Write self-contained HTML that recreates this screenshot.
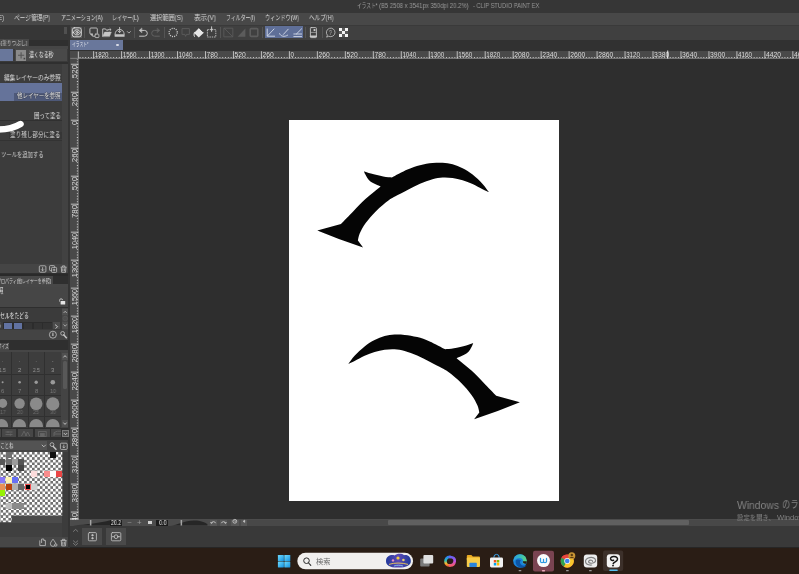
<!DOCTYPE html>
<html lang="ja">
<head>
<meta charset="utf-8">
<title>CLIP STUDIO PAINT EX</title>
<style>
*{box-sizing:border-box;margin:0;padding:0}
html,body{width:799px;height:574px;overflow:hidden;background:#2d2d2d}
body{font-family:"Liberation Sans","Noto Sans CJK JP",sans-serif;color:#d0d0d0;font-size:7px;position:relative}
.a{position:absolute}
.t{position:absolute;white-space:pre;line-height:1;transform-origin:0 50%;display:block;will-change:transform}
svg{position:absolute;overflow:visible;will-change:transform}
</style>
</head>
<body>
<div class="a" style="left:0px;top:0px;width:799px;height:12.5px;background:#363636;"></div>
<div class="a" style="left:0px;top:12.5px;width:799px;height:12.5px;background:#484848;"></div>
<div class="a" style="left:0px;top:25px;width:799px;height:14.6px;background:#404040;"></div>
<div class="a" style="left:0px;top:24.8px;width:799px;height:0.8px;background:#3a3a3a;"></div>
<div class="a" style="left:0px;top:39.6px;width:799px;height:11.2px;background:#313131;"></div>
<div class="a" style="left:69.7px;top:39.8px;width:53.2px;height:10.2px;background:#69779b;"></div>
<div class="a" style="left:69.7px;top:50.8px;width:729.3px;height:7.9px;background:#494949;"></div>
<div class="a" style="left:69.7px;top:58.6px;width:8.5px;height:460.6px;background:#494949;"></div>
<div class="a" style="left:78.2px;top:58.6px;width:720.8px;height:460.6px;background:#2e2e2e;"></div>
<div class="a" style="left:289px;top:119.8px;width:270.2px;height:381.2px;background:#ffffff;"></div>
<div class="a" style="left:69.7px;top:519.3px;width:729.3px;height:6.7px;background:#4c4c4c;"></div>
<div class="a" style="left:69.7px;top:526px;width:729.3px;height:20.8px;background:#393939;"></div>
<div class="a" style="left:0px;top:546.8px;width:799px;height:1.4px;background:#262626;"></div>
<div class="a" style="left:0px;top:548px;width:799px;height:26px;background:#2a1d15;"></div>
<div class="a" style="left:116.3px;top:43.6px;width:2.4px;height:2.4px;background:#d8dbe6;border-radius:50%"></div>
<div class="a" style="left:0px;top:39.6px;width:68.3px;height:508.4px;background:#2f2f2f;"></div>
<div class="a" style="left:68.3px;top:39.6px;width:1.4px;height:508.4px;background:#343434;"></div>
<div class="a" style="left:0px;top:25.4px;width:69.7px;height:14.2px;background:#363636;"></div>
<div class="a" style="left:64.4px;top:27.4px;width:2.8px;height:6.8px;background:#505050;"></div>
<div class="a" style="left:0px;top:38.6px;width:28.8px;height:7.9px;background:#474747;"></div>
<div class="a" style="left:0px;top:46.4px;width:68.3px;height:2.2px;background:#464646;"></div>
<div class="a" style="left:0px;top:48.6px;width:68.3px;height:13px;background:#3a3a3a;"></div>
<div class="a" style="left:0px;top:49.4px;width:13.2px;height:11.8px;background:#69779b;"></div>
<div class="a" style="left:15.4px;top:49.4px;width:51.8px;height:11.8px;background:#494949;"></div>
<div class="a" style="left:16px;top:50px;width:10.2px;height:10.6px;background:#8a8a8a;"></div>
<svg style="left:16px;top:50px" width="10.2" height="10.6" viewBox="0 0 10.2 10.6"><path d="M5.1 2.2V8.4M2 5.3H8.2" stroke="#555" stroke-width="1.1" fill="none"/><rect x="7.6" y="7.8" width="1.6" height="1.6" fill="#444"/></svg>
<div class="a" style="left:0px;top:64px;width:61.6px;height:199.5px;background:#3c3c3c;"></div>
<div class="a" style="left:61.6px;top:64px;width:6.7px;height:199.5px;background:#424242;"></div>
<div class="a" style="left:0px;top:83px;width:61.6px;height:17.8px;background:#65739a;"></div>
<div class="a" style="left:14.4px;top:93.2px;width:47.2px;height:7.4px;background:rgba(30,34,52,0.32);"></div>
<div class="a" style="left:0px;top:119.5px;width:61.6px;height:0.8px;background:#303030;"></div>
<div class="a" style="left:0px;top:140.3px;width:61.6px;height:0.8px;background:#333333;"></div>
<svg style="left:0;top:118px" width="30" height="18" viewBox="0 118 30 18"><path d="M-4 129.5 C5 129.8 13 128.8 20.5 124.1" stroke="#fff" stroke-width="6.5" stroke-linecap="round" fill="none"/></svg>
<div class="a" style="left:9.4px;top:132.2px;width:52.2px;height:7.2px;background:rgba(50,50,50,0.55);"></div>
<div class="a" style="left:0px;top:263.5px;width:68.3px;height:9.8px;background:#454545;"></div>
<svg style="left:38px;top:264px" width="30" height="9" viewBox="38 264 30 9" fill="none" stroke="#c4c4c4" stroke-width="0.8"><rect x="39.3" y="265.8" width="6.6" height="6.4" rx="1"/><path d="M42.6 267.2V270.6M41.2 269.4L42.6 270.8L44 269.4"/><rect x="49.6" y="265.6" width="5" height="5" rx="0.8"/><rect x="51.6" y="267.4" width="5" height="5" rx="0.8" fill="#454545"/><path d="M54.1 268.6V271.2M52.8 269.9H55.4"/><path d="M60.6 267.2H66.6M62.4 267V265.9H64.8V267M61.3 267.4L61.7 272.3H65.5L65.9 267.4M62.8 268.4V271.2M64.4 268.4V271.2"/></svg>
<div class="a" style="left:0px;top:276px;width:52.7px;height:8.6px;background:#484848;"></div>
<div class="a" style="left:0px;top:273.6px;width:68.3px;height:2.4px;background:#2a2a2a;"></div>
<div class="a" style="left:0px;top:284.2px;width:68.3px;height:3.1px;background:#474747;"></div>
<div class="a" style="left:0px;top:287.2px;width:68.3px;height:20px;background:#464646;"></div>
<div class="a" style="left:0px;top:307.2px;width:68.3px;height:22.6px;background:#3b3b3b;"></div>
<svg style="left:58px;top:298px" width="8" height="7" viewBox="58 298 8 7"><path d="M59.6 301.6V300.4A1.5 1.5 0 0 1 62.6 300.2" stroke="#d8d8d8" stroke-width="0.8" fill="none"/><rect x="60.6" y="301" width="4.6" height="3.4" rx="0.5" fill="#e4e4e4"/></svg>
<div class="a" style="left:0px;top:307.2px;width:68.3px;height:0.8px;background:#2e2e2e;"></div>
<div class="a" style="left:62px;top:308.4px;width:6.3px;height:21.2px;background:#464646;"></div>
<div class="a" style="left:62.3px;top:309.2px;width:5.8px;height:5.8px;background:#505050;"></div>
<div class="a" style="left:62.3px;top:322px;width:5.8px;height:6.6px;background:#505050;"></div>
<svg style="left:62px;top:308px" width="7" height="22" viewBox="62 308 7 22" fill="none" stroke="#bdbdbd" stroke-width="0.8"><path d="M63.6 313L65.2 311.2L66.8 313M63.6 324.4L65.2 326.2L66.8 324.4"/><circle cx="65.2" cy="318.5" r="2.3" stroke="#595959" fill="#4e4e4e"/></svg>
<div class="a" style="left:3px;top:322.4px;width:49.2px;height:6.8px;background:#2c2c2c;"></div>
<div class="a" style="left:3.9px;top:322.9px;width:8.2px;height:5.8px;background:#6172a1;"></div>
<div class="a" style="left:13.8px;top:322.9px;width:8.2px;height:5.8px;background:#6172a1;"></div>
<div class="a" style="left:23.9px;top:322.9px;width:8.2px;height:5.8px;background:#343434;"></div>
<div class="a" style="left:33.6px;top:322.9px;width:8.2px;height:5.8px;background:#343434;"></div>
<div class="a" style="left:43.4px;top:322.9px;width:8.2px;height:5.8px;background:#343434;"></div>
<div class="a" style="left:52.6px;top:322.2px;width:7.6px;height:7.2px;background:#4c4c4c;"></div>
<svg style="left:52px;top:322px" width="9" height="8" viewBox="52 322 9 8" fill="none" stroke="#d0d0d0" stroke-width="0.9"><path d="M55 324.6L57.6 326.6L55.6 328.6"/></svg>
<div class="a" style="left:0px;top:329.8px;width:68.3px;height:10px;background:#444444;"></div>
<svg style="left:48px;top:330px" width="21" height="10" viewBox="48 330 21 10" fill="none" stroke="#c4c4c4" stroke-width="0.8"><circle cx="52.9" cy="334.7" r="3.5"/><path d="M52.9 332.6V334.9" stroke-width="1"/><circle cx="52.9" cy="335.2" r="0.8" fill="#c4c4c4" stroke="none"/><path d="M66.8 338.2L63.4 334.6" stroke-width="1.5"/><circle cx="62.6" cy="333.4" r="1.9"/></svg>
<div class="a" style="left:0px;top:342.7px;width:9px;height:7.6px;background:#484848;"></div>
<div class="a" style="left:0px;top:350px;width:68.3px;height:2.4px;background:#464646;"></div>
<div class="a" style="left:0px;top:352.4px;width:61.3px;height:75.2px;background:#3d3d3d;"></div>
<div class="a" style="left:11.0px;top:352.4px;width:0.9px;height:75.2px;background:#303030;"></div>
<div class="a" style="left:27.6px;top:352.4px;width:0.9px;height:75.2px;background:#303030;"></div>
<div class="a" style="left:44.2px;top:352.4px;width:0.9px;height:75.2px;background:#303030;"></div>
<div class="a" style="left:0px;top:373.8px;width:61.3px;height:0.9px;background:#303030;"></div>
<div class="a" style="left:0px;top:395px;width:61.3px;height:0.9px;background:#303030;"></div>
<div class="a" style="left:0px;top:415.8px;width:61.3px;height:0.9px;background:#303030;"></div>
<svg style="left:0;top:352.4px;overflow:hidden" width="61.3" height="75.2" viewBox="0 352.4 61.3 75.2"><circle cx="2.6" cy="361.8" r="0.35" fill="#8a8a8a"/><circle cx="19.6" cy="361.8" r="0.4" fill="#8a8a8a"/><circle cx="36.2" cy="361.8" r="0.45" fill="#8a8a8a"/><circle cx="52.8" cy="361.8" r="0.5" fill="#8a8a8a"/><circle cx="2.6" cy="382.7" r="1.0" fill="#9a9a9a"/><circle cx="19.6" cy="382.7" r="1.3" fill="#9a9a9a"/><circle cx="36.2" cy="382.7" r="1.7" fill="#9a9a9a"/><circle cx="52.8" cy="382.7" r="2.3" fill="#9a9a9a"/><circle cx="2.6" cy="403.7" r="4.6" fill="#8a8a8a"/><circle cx="19.6" cy="403.88" r="5.2" fill="#8a8a8a"/><circle cx="36.2" cy="404.21000000000004" r="6.3" fill="#8a8a8a"/><circle cx="52.8" cy="404.3" r="6.6" fill="#8a8a8a"/><circle cx="1.5" cy="426.0" r="6.6" fill="#8a8a8a"/><circle cx="19.4" cy="426.0" r="6.6" fill="#8a8a8a"/><circle cx="36.2" cy="426.2" r="6.8" fill="#8a8a8a"/><circle cx="52.8" cy="426.2" r="6.8" fill="#8a8a8a"/></svg>
<div class="a" style="left:61.3px;top:352.4px;width:7px;height:75.2px;background:#444444;"></div>
<div class="a" style="left:62px;top:353px;width:5.9px;height:6.6px;background:#505050;"></div>
<div class="a" style="left:62px;top:420px;width:5.9px;height:7px;background:#505050;"></div>
<div class="a" style="left:63px;top:360.6px;width:4.2px;height:28.4px;background:#585858;border-radius:1.5px"></div>
<svg style="left:61px;top:352px" width="8" height="76" viewBox="61 352 8 76" fill="none" stroke="#c8c8c8" stroke-width="0.9"><path d="M63.4 357.4L65 355.6L66.6 357.4M63.4 422.6L65 424.4L66.6 422.6"/></svg>
<div class="a" style="left:0px;top:427.6px;width:68.3px;height:1.8px;background:#2e2e2e;"></div>
<div class="a" style="left:-2px;top:429.4px;width:2.6px;height:7.9px;background:#474747;"></div>
<div class="a" style="left:1.8px;top:429.4px;width:14.2px;height:7.9px;background:#474747;"></div>
<div class="a" style="left:18px;top:429.4px;width:15px;height:7.9px;background:#474747;"></div>
<div class="a" style="left:35px;top:429.4px;width:14.6px;height:7.9px;background:#474747;"></div>
<div class="a" style="left:51.2px;top:429.4px;width:10.2px;height:7.9px;background:#474747;"></div>
<svg style="left:0;top:429px" width="62" height="9" viewBox="0 429 62 9" fill="none" stroke="#666" stroke-width="0.9"><path d="M5.5 432H12.5M5.5 434.6H12.5M8 431V433M10.4 433.6V435.6"/><path d="M21.5 436L24 431.2L26.5 436M25.5 436L27.6 432L29.8 436"/><rect x="38.6" y="431.6" width="7.6" height="4.8"/><rect x="40.6" y="433.4" width="3.6" height="3" fill="#666"/><path d="M54 436V432.6L57.4 431.2H61M54 434H61"/></svg>
<div class="a" style="left:62.4px;top:430px;width:6.2px;height:7.3px;background:#505050;border:0.8px solid #7a7a7a"></div>
<svg style="left:62px;top:430px" width="7" height="8" viewBox="62 430 7 8" fill="none" stroke="#c8c8c8" stroke-width="0.9"><path d="M63.8 433L65.5 434.8L67.2 433"/></svg>
<div class="a" style="left:0px;top:437.3px;width:68.3px;height:110.7px;background:#2f2f2f;"></div>
<div class="a" style="left:0px;top:440px;width:68.3px;height:11.6px;background:#444444;"></div>
<div class="a" style="left:0px;top:441px;width:47.3px;height:9px;background:#535353;"></div>
<svg style="left:40px;top:441px" width="29" height="10" viewBox="40 441 29 10" fill="none" stroke="#c4c4c4" stroke-width="0.8"><path d="M41.8 444.8L43.8 446.8L45.8 444.8" stroke-width="0.9"/><path d="M56.4 449.8L52.8 446" stroke-width="1.5"/><circle cx="52" cy="444.6" r="1.9"/><rect x="60.4" y="443.2" width="6.8" height="6.2" rx="1"/><path d="M63.8 444.6V447.8M62.4 446.6L63.8 448L65.2 446.6"/></svg>
<div class="a" style="left:0px;top:451.6px;width:62.3px;height:71px;background:#4b4b4b;"></div>
<div class="a" style="left:62.3px;top:451.6px;width:6px;height:85px;background:#3c3c3c;"></div>
<div class="a" style="left:0px;top:522.6px;width:62.3px;height:14px;background:#404040;"></div>
<svg style="left:0;top:452.2px" width="62.3" height="70.2" viewBox="0 452.2 62.3 70.2"><defs><pattern id="chk" patternUnits="userSpaceOnUse" x="0.5" y="449.46" width="5.25" height="5.28"><rect width="5.25" height="5.28" fill="#fff"/><rect x="2.625" width="2.625" height="2.64" fill="#707070"/><rect y="2.64" width="2.625" height="2.64" fill="#707070"/></pattern></defs><rect x="0" y="452.2" width="62.3" height="63.6" fill="url(#chk)"/><rect x="0" y="515.8" width="11.6" height="6.6" fill="url(#chk)"/></svg>
<div class="a" style="left:5.5px;top:452.2px;width:6.1px;height:6.06px;background:#6f6f6f;"></div>
<div class="a" style="left:49.95px;top:452.2px;width:6.1px;height:6.06px;background:#111111;"></div>
<div class="a" style="left:0px;top:458.51px;width:5.25px;height:6.06px;background:#585858;"></div>
<div class="a" style="left:5.5px;top:458.51px;width:6.1px;height:6.06px;background:#707070;"></div>
<div class="a" style="left:11.85px;top:458.51px;width:6.1px;height:6.06px;background:#9c9c9c;"></div>
<div class="a" style="left:18.2px;top:458.51px;width:6.1px;height:6.06px;background:#555555;"></div>
<div class="a" style="left:5.5px;top:464.82px;width:6.1px;height:6.06px;background:#000000;"></div>
<div class="a" style="left:18.2px;top:464.82px;width:6.1px;height:6.06px;background:#444444;"></div>
<div class="a" style="left:30.9px;top:471.13px;width:6.1px;height:6.06px;background:#fcdcdc;"></div>
<div class="a" style="left:43.6px;top:471.13px;width:6.1px;height:6.06px;background:#f98c8c;"></div>
<div class="a" style="left:49.95px;top:471.13px;width:6.1px;height:6.06px;background:#ffffff;"></div>
<div class="a" style="left:56.3px;top:471.13px;width:6.1px;height:6.06px;background:#ea4646;"></div>
<div class="a" style="left:0px;top:477.44px;width:5.25px;height:6.06px;background:#8878f8;"></div>
<div class="a" style="left:5.5px;top:477.44px;width:6.1px;height:6.06px;background:#fdf4b4;"></div>
<div class="a" style="left:11.85px;top:477.44px;width:6.1px;height:6.06px;background:#6670f4;"></div>
<div class="a" style="left:0px;top:483.75px;width:5.25px;height:6.06px;background:#e89058;"></div>
<div class="a" style="left:5.5px;top:483.75px;width:6.1px;height:6.06px;background:#b7430d;"></div>
<div class="a" style="left:11.85px;top:483.75px;width:6.1px;height:6.06px;background:#b0b0b0;"></div>
<div class="a" style="left:18.2px;top:483.75px;width:6.1px;height:6.06px;background:#666666;"></div>
<div class="a" style="left:24.55px;top:483.75px;width:6.1px;height:6.06px;background:#000000;border:1px solid #f05050;"></div>
<div class="a" style="left:30.9px;top:483.75px;width:6.1px;height:6.06px;background:#cfcfcf;"></div>
<div class="a" style="left:0px;top:490.06px;width:5.25px;height:6.06px;background:#96f205;"></div>
<div class="a" style="left:5.5px;top:502.68px;width:6.1px;height:6.06px;background:#bdbdbd;"></div>
<div class="a" style="left:11.85px;top:502.68px;width:12.45px;height:6.06px;background:#8a8a8a;"></div>
<div class="a" style="left:0px;top:536.6px;width:68.3px;height:10.3px;background:#474747;"></div>
<svg style="left:38px;top:537px" width="30" height="10" viewBox="38 537 30 10" fill="none" stroke="#c4c4c4" stroke-width="0.8"><path d="M39.8 540.4V545.6H45.4V540.4H43.8M41.6 543V539H43.8V540.6" /><path d="M53 539.2C51.4 541.4 50.4 542.6 50.4 543.8A2.6 2.6 0 0 0 55.6 543.8C55.6 542.6 54.6 541.4 53 539.2Z"/><circle cx="55.8" cy="545" r="1.2" fill="#474747"/><path d="M60.6 540.6H66.6M62.4 540.4V539.3H64.8V540.4M61.3 540.8L61.7 545.9H65.5L65.9 540.8M62.8 541.8V544.8M64.4 541.8V544.8"/></svg>
<svg style="left:69.7px;top:50px;overflow:hidden" width="729.3" height="8.6" viewBox="69.7 50 729.3 8.6"><path d="M77.8 51.5V58.6" stroke="#dadada" stroke-width="0.8"/><path d="M69.7 58.35H799" stroke="#a0a0a0" stroke-width="0.6"/><path d="M78.2 57.5H799" stroke="#dadada" stroke-width="1.1" stroke-dasharray="0.9 1.899" stroke-dashoffset="-0.875" opacity="0.9"/><path d="M93.07 51.2V58.6" stroke="#dadada" stroke-width="0.8"/><text x="94.17" y="57.4" font-size="7.1" fill="#dadada" textLength="13.90" lengthAdjust="spacingAndGlyphs" font-family='"Liberation Sans",sans-serif'>1820</text><path d="M121.06 51.2V58.6" stroke="#dadada" stroke-width="0.8"/><text x="122.16" y="57.4" font-size="7.1" fill="#dadada" textLength="13.90" lengthAdjust="spacingAndGlyphs" font-family='"Liberation Sans",sans-serif'>1560</text><path d="M149.05 51.2V58.6" stroke="#dadada" stroke-width="0.8"/><text x="150.15" y="57.4" font-size="7.1" fill="#dadada" textLength="13.90" lengthAdjust="spacingAndGlyphs" font-family='"Liberation Sans",sans-serif'>1300</text><path d="M177.04 51.2V58.6" stroke="#dadada" stroke-width="0.8"/><text x="178.14" y="57.4" font-size="7.1" fill="#dadada" textLength="13.90" lengthAdjust="spacingAndGlyphs" font-family='"Liberation Sans",sans-serif'>1040</text><path d="M205.03 51.2V58.6" stroke="#dadada" stroke-width="0.8"/><text x="206.13" y="57.4" font-size="7.1" fill="#dadada" textLength="11.30" lengthAdjust="spacingAndGlyphs" font-family='"Liberation Sans",sans-serif'>780</text><path d="M233.02 51.2V58.6" stroke="#dadada" stroke-width="0.8"/><text x="234.12" y="57.4" font-size="7.1" fill="#dadada" textLength="11.30" lengthAdjust="spacingAndGlyphs" font-family='"Liberation Sans",sans-serif'>520</text><path d="M261.01 51.2V58.6" stroke="#dadada" stroke-width="0.8"/><text x="262.11" y="57.4" font-size="7.1" fill="#dadada" textLength="11.30" lengthAdjust="spacingAndGlyphs" font-family='"Liberation Sans",sans-serif'>260</text><path d="M289.00 51.2V58.6" stroke="#dadada" stroke-width="0.8"/><text x="290.10" y="57.4" font-size="7.1" fill="#dadada" textLength="3.50" lengthAdjust="spacingAndGlyphs" font-family='"Liberation Sans",sans-serif'>0</text><path d="M316.99 51.2V58.6" stroke="#dadada" stroke-width="0.8"/><text x="318.09" y="57.4" font-size="7.1" fill="#dadada" textLength="11.30" lengthAdjust="spacingAndGlyphs" font-family='"Liberation Sans",sans-serif'>260</text><path d="M344.98 51.2V58.6" stroke="#dadada" stroke-width="0.8"/><text x="346.08" y="57.4" font-size="7.1" fill="#dadada" textLength="11.30" lengthAdjust="spacingAndGlyphs" font-family='"Liberation Sans",sans-serif'>520</text><path d="M372.97 51.2V58.6" stroke="#dadada" stroke-width="0.8"/><text x="374.07" y="57.4" font-size="7.1" fill="#dadada" textLength="11.30" lengthAdjust="spacingAndGlyphs" font-family='"Liberation Sans",sans-serif'>780</text><path d="M400.96 51.2V58.6" stroke="#dadada" stroke-width="0.8"/><text x="402.06" y="57.4" font-size="7.1" fill="#dadada" textLength="13.90" lengthAdjust="spacingAndGlyphs" font-family='"Liberation Sans",sans-serif'>1040</text><path d="M428.95 51.2V58.6" stroke="#dadada" stroke-width="0.8"/><text x="430.05" y="57.4" font-size="7.1" fill="#dadada" textLength="13.90" lengthAdjust="spacingAndGlyphs" font-family='"Liberation Sans",sans-serif'>1300</text><path d="M456.94 51.2V58.6" stroke="#dadada" stroke-width="0.8"/><text x="458.04" y="57.4" font-size="7.1" fill="#dadada" textLength="13.90" lengthAdjust="spacingAndGlyphs" font-family='"Liberation Sans",sans-serif'>1560</text><path d="M484.93 51.2V58.6" stroke="#dadada" stroke-width="0.8"/><text x="486.03" y="57.4" font-size="7.1" fill="#dadada" textLength="13.90" lengthAdjust="spacingAndGlyphs" font-family='"Liberation Sans",sans-serif'>1820</text><path d="M512.92 51.2V58.6" stroke="#dadada" stroke-width="0.8"/><text x="514.02" y="57.4" font-size="7.1" fill="#dadada" textLength="15.20" lengthAdjust="spacingAndGlyphs" font-family='"Liberation Sans",sans-serif'>2080</text><path d="M540.91 51.2V58.6" stroke="#dadada" stroke-width="0.8"/><text x="542.01" y="57.4" font-size="7.1" fill="#dadada" textLength="15.20" lengthAdjust="spacingAndGlyphs" font-family='"Liberation Sans",sans-serif'>2340</text><path d="M568.90 51.2V58.6" stroke="#dadada" stroke-width="0.8"/><text x="570.00" y="57.4" font-size="7.1" fill="#dadada" textLength="15.20" lengthAdjust="spacingAndGlyphs" font-family='"Liberation Sans",sans-serif'>2600</text><path d="M596.89 51.2V58.6" stroke="#dadada" stroke-width="0.8"/><text x="597.99" y="57.4" font-size="7.1" fill="#dadada" textLength="15.20" lengthAdjust="spacingAndGlyphs" font-family='"Liberation Sans",sans-serif'>2860</text><path d="M624.88 51.2V58.6" stroke="#dadada" stroke-width="0.8"/><text x="625.98" y="57.4" font-size="7.1" fill="#dadada" textLength="13.90" lengthAdjust="spacingAndGlyphs" font-family='"Liberation Sans",sans-serif'>3120</text><path d="M652.87 51.2V58.6" stroke="#dadada" stroke-width="0.8"/><text x="653.97" y="57.4" font-size="7.1" fill="#dadada" textLength="15.20" lengthAdjust="spacingAndGlyphs" font-family='"Liberation Sans",sans-serif'>3380</text><path d="M680.86 51.2V58.6" stroke="#dadada" stroke-width="0.8"/><text x="681.96" y="57.4" font-size="7.1" fill="#dadada" textLength="15.20" lengthAdjust="spacingAndGlyphs" font-family='"Liberation Sans",sans-serif'>3640</text><path d="M708.85 51.2V58.6" stroke="#dadada" stroke-width="0.8"/><text x="709.95" y="57.4" font-size="7.1" fill="#dadada" textLength="15.20" lengthAdjust="spacingAndGlyphs" font-family='"Liberation Sans",sans-serif'>3900</text><path d="M736.84 51.2V58.6" stroke="#dadada" stroke-width="0.8"/><text x="737.94" y="57.4" font-size="7.1" fill="#dadada" textLength="13.90" lengthAdjust="spacingAndGlyphs" font-family='"Liberation Sans",sans-serif'>4160</text><path d="M764.83 51.2V58.6" stroke="#dadada" stroke-width="0.8"/><text x="765.93" y="57.4" font-size="7.1" fill="#dadada" textLength="15.20" lengthAdjust="spacingAndGlyphs" font-family='"Liberation Sans",sans-serif'>4420</text><path d="M792.82 51.2V58.6" stroke="#dadada" stroke-width="0.8"/><text x="793.92" y="57.4" font-size="7.1" fill="#dadada" textLength="15.20" lengthAdjust="spacingAndGlyphs" font-family='"Liberation Sans",sans-serif'>4680</text><path d="M667.6 50.5V58.6" stroke="#ffffff" stroke-width="0.9"/></svg>
<svg style="left:69.7px;top:58.6px;overflow:hidden" width="8.5" height="460.6" viewBox="69.7 58.6 8.5 460.6"><path d="M77.95 58.6V519.2" stroke="#a0a0a0" stroke-width="0.6"/><path d="M77.1 58.6V519.2" stroke="#dadada" stroke-width="1.1" stroke-dasharray="0.9 1.899" stroke-dashoffset="-2.421" opacity="0.9"/><path d="M70.6 63.82H78.2" stroke="#dadada" stroke-width="0.8"/><text transform="translate(76.6 77.77) rotate(-90)" font-size="7.9" fill="#dadada" textLength="13.25" lengthAdjust="spacingAndGlyphs" font-family='"Liberation Sans",sans-serif'>520</text><path d="M70.6 91.81H78.2" stroke="#dadada" stroke-width="0.8"/><text transform="translate(76.6 105.76) rotate(-90)" font-size="7.9" fill="#dadada" textLength="13.25" lengthAdjust="spacingAndGlyphs" font-family='"Liberation Sans",sans-serif'>260</text><path d="M70.6 119.80H78.2" stroke="#dadada" stroke-width="0.8"/><text transform="translate(76.6 124.65) rotate(-90)" font-size="7.9" fill="#dadada" textLength="4.15" lengthAdjust="spacingAndGlyphs" font-family='"Liberation Sans",sans-serif'>0</text><path d="M70.6 147.79H78.2" stroke="#dadada" stroke-width="0.8"/><text transform="translate(76.6 161.74) rotate(-90)" font-size="7.9" fill="#dadada" textLength="13.25" lengthAdjust="spacingAndGlyphs" font-family='"Liberation Sans",sans-serif'>260</text><path d="M70.6 175.78H78.2" stroke="#dadada" stroke-width="0.8"/><text transform="translate(76.6 189.73) rotate(-90)" font-size="7.9" fill="#dadada" textLength="13.25" lengthAdjust="spacingAndGlyphs" font-family='"Liberation Sans",sans-serif'>520</text><path d="M70.6 203.77H78.2" stroke="#dadada" stroke-width="0.8"/><text transform="translate(76.6 217.72) rotate(-90)" font-size="7.9" fill="#dadada" textLength="13.25" lengthAdjust="spacingAndGlyphs" font-family='"Liberation Sans",sans-serif'>780</text><path d="M70.6 231.76H78.2" stroke="#dadada" stroke-width="0.8"/><text transform="translate(76.6 248.81) rotate(-90)" font-size="7.9" fill="#dadada" textLength="16.35" lengthAdjust="spacingAndGlyphs" font-family='"Liberation Sans",sans-serif'>1040</text><path d="M70.6 259.75H78.2" stroke="#dadada" stroke-width="0.8"/><text transform="translate(76.6 276.80) rotate(-90)" font-size="7.9" fill="#dadada" textLength="16.35" lengthAdjust="spacingAndGlyphs" font-family='"Liberation Sans",sans-serif'>1300</text><path d="M70.6 287.74H78.2" stroke="#dadada" stroke-width="0.8"/><text transform="translate(76.6 304.79) rotate(-90)" font-size="7.9" fill="#dadada" textLength="16.35" lengthAdjust="spacingAndGlyphs" font-family='"Liberation Sans",sans-serif'>1560</text><path d="M70.6 315.73H78.2" stroke="#dadada" stroke-width="0.8"/><text transform="translate(76.6 332.78) rotate(-90)" font-size="7.9" fill="#dadada" textLength="16.35" lengthAdjust="spacingAndGlyphs" font-family='"Liberation Sans",sans-serif'>1820</text><path d="M70.6 343.72H78.2" stroke="#dadada" stroke-width="0.8"/><text transform="translate(76.6 362.22) rotate(-90)" font-size="7.9" fill="#dadada" textLength="17.80" lengthAdjust="spacingAndGlyphs" font-family='"Liberation Sans",sans-serif'>2080</text><path d="M70.6 371.71H78.2" stroke="#dadada" stroke-width="0.8"/><text transform="translate(76.6 390.21) rotate(-90)" font-size="7.9" fill="#dadada" textLength="17.80" lengthAdjust="spacingAndGlyphs" font-family='"Liberation Sans",sans-serif'>2340</text><path d="M70.6 399.70H78.2" stroke="#dadada" stroke-width="0.8"/><text transform="translate(76.6 418.20) rotate(-90)" font-size="7.9" fill="#dadada" textLength="17.80" lengthAdjust="spacingAndGlyphs" font-family='"Liberation Sans",sans-serif'>2600</text><path d="M70.6 427.69H78.2" stroke="#dadada" stroke-width="0.8"/><text transform="translate(76.6 446.19) rotate(-90)" font-size="7.9" fill="#dadada" textLength="17.80" lengthAdjust="spacingAndGlyphs" font-family='"Liberation Sans",sans-serif'>2860</text><path d="M70.6 455.68H78.2" stroke="#dadada" stroke-width="0.8"/><text transform="translate(76.6 472.73) rotate(-90)" font-size="7.9" fill="#dadada" textLength="16.35" lengthAdjust="spacingAndGlyphs" font-family='"Liberation Sans",sans-serif'>3120</text><path d="M70.6 483.67H78.2" stroke="#dadada" stroke-width="0.8"/><text transform="translate(76.6 502.17) rotate(-90)" font-size="7.9" fill="#dadada" textLength="17.80" lengthAdjust="spacingAndGlyphs" font-family='"Liberation Sans",sans-serif'>3380</text><path d="M70.6 511.66H78.2" stroke="#dadada" stroke-width="0.8"/><text transform="translate(76.6 530.16) rotate(-90)" font-size="7.9" fill="#dadada" textLength="17.80" lengthAdjust="spacingAndGlyphs" font-family='"Liberation Sans",sans-serif'>3640</text><path d="M69.7 518.6H78.2" stroke="#fff" stroke-width="0.9"/></svg>
<svg style="left:289px;top:119.8px" width="270.2" height="381.2" viewBox="289 119.8 270.2 381.2"><path d="M317.3 230.3L341 223.8C343.10 221.62 349.48 214.90 353.60 210.70C357.72 206.50 361.20 202.68 365.70 198.60C370.20 194.52 378.12 188.27 380.60 186.20C378.85 185.35 372.63 183.07 370.10 181.10C367.57 179.13 366.42 176.08 365.40 174.40C364.38 172.72 364.23 171.57 364.00 171.00C365.17 171.40 367.80 172.52 371.00 173.40C374.20 174.28 379.72 175.65 383.20 176.30C386.68 176.95 390.45 177.13 391.90 177.30C394.50 175.98 402.82 171.45 407.50 169.40C412.18 167.35 415.83 166.08 420.00 165.00C424.17 163.92 428.73 163.32 432.50 162.90C436.27 162.48 439.25 162.32 442.60 162.50C445.95 162.68 449.27 163.07 452.60 164.00C455.93 164.93 459.27 166.37 462.60 168.10C465.93 169.83 469.27 171.78 472.60 174.40C475.93 177.02 479.88 180.88 482.60 183.80C485.32 186.72 487.85 190.55 488.90 191.90C487.85 191.42 485.32 190.35 482.60 189.00C479.88 187.65 475.93 185.30 472.60 183.80C469.27 182.30 465.93 181.00 462.60 180.00C459.27 179.00 455.93 178.25 452.60 177.80C449.27 177.35 445.95 177.10 442.60 177.30C439.25 177.50 436.27 177.97 432.50 179.00C428.73 180.03 424.17 181.70 420.00 183.50C415.83 185.30 411.67 187.67 407.50 189.80C403.33 191.93 398.18 194.55 395.00 196.30C391.82 198.05 391.53 197.90 388.40 200.30C385.27 202.70 379.98 206.93 376.20 210.70C372.42 214.47 368.45 219.12 365.70 222.90C362.95 226.68 361.00 230.48 359.70 233.40C358.40 236.32 358.20 239.23 357.90 240.40L363.1 247.3Q339.5 239.6 317.3 230.3Z" fill="#050505"/><path d="M317.3 230.3L341 223.8C343.10 221.62 349.48 214.90 353.60 210.70C357.72 206.50 361.20 202.68 365.70 198.60C370.20 194.52 378.12 188.27 380.60 186.20C378.85 185.35 372.63 183.07 370.10 181.10C367.57 179.13 366.42 176.08 365.40 174.40C364.38 172.72 364.23 171.57 364.00 171.00C365.17 171.40 367.80 172.52 371.00 173.40C374.20 174.28 379.72 175.65 383.20 176.30C386.68 176.95 390.45 177.13 391.90 177.30C394.50 175.98 402.82 171.45 407.50 169.40C412.18 167.35 415.83 166.08 420.00 165.00C424.17 163.92 428.73 163.32 432.50 162.90C436.27 162.48 439.25 162.32 442.60 162.50C445.95 162.68 449.27 163.07 452.60 164.00C455.93 164.93 459.27 166.37 462.60 168.10C465.93 169.83 469.27 171.78 472.60 174.40C475.93 177.02 479.88 180.88 482.60 183.80C485.32 186.72 487.85 190.55 488.90 191.90C487.85 191.42 485.32 190.35 482.60 189.00C479.88 187.65 475.93 185.30 472.60 183.80C469.27 182.30 465.93 181.00 462.60 180.00C459.27 179.00 455.93 178.25 452.60 177.80C449.27 177.35 445.95 177.10 442.60 177.30C439.25 177.50 436.27 177.97 432.50 179.00C428.73 180.03 424.17 181.70 420.00 183.50C415.83 185.30 411.67 187.67 407.50 189.80C403.33 191.93 398.18 194.55 395.00 196.30C391.82 198.05 391.53 197.90 388.40 200.30C385.27 202.70 379.98 206.93 376.20 210.70C372.42 214.47 368.45 219.12 365.70 222.90C362.95 226.68 361.00 230.48 359.70 233.40C358.40 236.32 358.20 239.23 357.90 240.40L363.1 247.3Q339.5 239.6 317.3 230.3Z" fill="#050505" transform="translate(837.2 171.8) scale(-1 1)"/></svg>
<div class="a" style="left:84.39999999999999px;top:27px;width:0.9px;height:11px;background:#555555;"></div>
<div class="a" style="left:134.4px;top:27px;width:0.9px;height:11px;background:#555555;"></div>
<div class="a" style="left:164.2px;top:27px;width:0.9px;height:11px;background:#555555;"></div>
<div class="a" style="left:219.6px;top:27px;width:0.9px;height:11px;background:#555555;"></div>
<div class="a" style="left:261.6px;top:27px;width:0.9px;height:11px;background:#555555;"></div>
<div class="a" style="left:305.20000000000005px;top:27px;width:0.9px;height:11px;background:#555555;"></div>
<div class="a" style="left:322.40000000000003px;top:27px;width:0.9px;height:11px;background:#555555;"></div>
<div class="a" style="left:71.3px;top:26.8px;width:11px;height:11px;background:#5c5c5c;"></div>
<svg style="left:60px;top:25px" width="300" height="15" viewBox="60 25 300 15" fill="none" stroke-linecap="round" stroke-linejoin="round"><rect x="72.3" y="27.8" width="9" height="9" rx="2" stroke="#dedede" stroke-width="0.9"/><path d="M73.4 32.4C74.4 30.4 75.6 29.8 76.8 29.8C78.8 29.8 79.8 31.2 80.4 32.4C79.4 34.2 78.2 34.9 76.8 34.9C75 34.9 74 33.6 73.4 32.4Z" stroke="#e0e0e0" stroke-width="0.9"/><circle cx="77" cy="32.4" r="1.1" stroke="#e0e0e0" stroke-width="0.8"/><path d="M94.6 36.2H92.8L89.9 33.6V29A1 1 0 0 1 90.9 28H96.3A1 1 0 0 1 97.3 29V33.4" stroke="#c6c6c6" stroke-width="0.9"/><path d="M90 33.6H92.8V36.2Z" fill="#c6c6c6" stroke="none"/><rect x="95.1" y="34.1" width="3.8" height="3.5" rx="0.7" stroke="#c6c6c6" stroke-width="0.85" fill="#404040"/><path d="M102.7 36.2V28.9H105.6L106.4 30.2H108" stroke="#c6c6c6" stroke-width="0.9"/><path d="M102.8 36.3L104.6 32.1H111.3L109.6 36.3Z" fill="#c6c6c6" stroke="#c6c6c6" stroke-width="0.5"/><path d="M108 29.6H110.8M109.9 28.5L111 29.6L109.9 30.7" stroke="#c6c6c6" stroke-width="0.8"/><path d="M115 34.2C115.3 31.2 117 29.4 119.6 29.4C122.2 29.4 123.9 31.2 124.2 34.2" stroke="#c6c6c6" stroke-width="0.9"/><path d="M119.6 27.4V32.2M118 30.9L119.6 32.6L121.2 30.9" stroke="#c6c6c6" stroke-width="0.9"/><rect x="114.6" y="34.3" width="10" height="2.5" rx="0.5" fill="#c6c6c6"/><path d="M127.4 31.6L128.9 33.1L130.4 31.6" stroke="#c6c6c6" stroke-width="0.8"/><path d="M140 30.4H144.4A2.9 2.9 0 0 1 144.4 36.2H139.6" stroke="#c6c6c6" stroke-width="1"/><path d="M141.6 28.2L139.2 30.4L141.6 32.6Z" fill="#c6c6c6" stroke="#c6c6c6" stroke-width="0.5"/><path d="M159 30.4H154.6A2.9 2.9 0 0 0 154.6 36.2H159.4" stroke="#616161" stroke-width="1"/><path d="M157.4 28.2L159.8 30.4L157.4 32.6Z" fill="#616161" stroke="#616161" stroke-width="0.5"/><circle cx="173.2" cy="32.5" r="4.1" stroke="#c6c6c6" stroke-width="1.3" stroke-dasharray="1.1 1.05" stroke-linecap="butt"/><path d="M182.4 28.6H189.4V34.4H186.4L185.6 36.4L184.8 34.4H182.4Z" stroke="#5c5c5c" stroke-width="0.9"/><path d="M198.8 27.8L203.8 32.8L198.8 37.6L193.8 32.8Z" fill="#e6e6e6"/><path d="M195 31.6L198.8 27.6L202.6 31.6" stroke="#2f2f2f" stroke-width="0.7"/><path d="M194.2 33.2C194 34.6 193.8 35.6 194.4 36.4" stroke="#e6e6e6" stroke-width="1"/><rect x="207.4" y="29.6" width="8.4" height="7.4" stroke="#c6c6c6" stroke-width="0.9" stroke-dasharray="1.4 0.9" stroke-linecap="butt"/><path d="M211.6 26.8V31.4" stroke="#c6c6c6" stroke-width="1"/><rect x="210.8" y="28.6" width="1.6" height="1.6" fill="#c6c6c6"/><rect x="224.2" y="28.2" width="8.6" height="8.6" stroke="#5a5a5a" stroke-width="0.9"/><path d="M224.4 28.4L232.6 36.6" stroke="#5a5a5a" stroke-width="0.9"/><path d="M245.4 28.6V36.8H237.6Z" fill="#5c5c5c"/><rect x="250.2" y="28.6" width="7.6" height="7.8" rx="1" stroke="#5c5c5c" stroke-width="1.6"/></svg>
<div class="a" style="left:264.6px;top:26.2px;width:38.3px;height:12px;background:#5f6f98;"></div>
<svg style="left:264px;top:26px" width="90" height="13" viewBox="264 26 90 13" fill="none" stroke-linecap="round" stroke-linejoin="round"><path d="M267.2 29V36.2H274.6M267.6 35.8L274 29" stroke="#d5dbea" stroke-width="0.9"/><path d="M279.6 33.6C280.6 36.6 284.6 37.2 287.6 35.2M283.4 34.4L288.2 29.2" stroke="#d5dbea" stroke-width="0.9"/><path d="M293.8 34H301.6M293.8 36.6H301.6M296.4 34L301.6 28.8" stroke="#d5dbea" stroke-width="0.9"/><rect x="310.4" y="27.6" width="6" height="10" rx="0.8" stroke="#c6c6c6" stroke-width="0.9"/><path d="M310.6 36.4H316.2" stroke="#c6c6c6" stroke-width="1.6"/><rect x="313.6" y="29" width="1.8" height="2" fill="#c6c6c6"/><path d="M311 32.4H316" stroke="#c6c6c6" stroke-width="0.6"/><path d="M326.8 36.8L327.4 35.2A4.3 4.3 0 1 1 329 36.4Z" stroke="#c6c6c6" stroke-width="0.8"/></svg>
<div class="a" style="left:338.6px;top:27.7px;width:9.3px;height:9.2px;background:#5a5a5a;"></div>
<div class="a" style="left:338.6px;top:27.7px;width:3.1px;height:3.07px;background:#f4f4f4;"></div>
<div class="a" style="left:344.8px;top:27.7px;width:3.1px;height:3.07px;background:#f4f4f4;"></div>
<div class="a" style="left:341.7px;top:30.77px;width:3.1px;height:3.07px;background:#f4f4f4;"></div>
<div class="a" style="left:338.6px;top:33.84px;width:3.1px;height:3.07px;background:#f4f4f4;"></div>
<div class="a" style="left:344.8px;top:33.84px;width:3.1px;height:3.07px;background:#f4f4f4;"></div>
<div class="a" style="left:70.6px;top:519.8px;width:40px;height:5.8px;background:#4b4b4b;"></div>
<svg style="left:71px;top:520px" width="40" height="6" viewBox="71 520 40 6"><path d="M73 525.4L110.4 525.4L110.4 520.2C100 522.6 87 524.6 73 525.4Z" fill="#262626"/><rect x="89.9" y="520" width="1.5" height="5.5" fill="#a4a4a4"/></svg>
<div class="a" style="left:110.4px;top:520px;width:12px;height:5.5px;background:#1c1c1c;"></div>
<div class="a" style="left:148.4px;top:520.9px;width:3.2px;height:3.2px;background:#d0d0d0;"></div>
<div class="a" style="left:155.6px;top:520px;width:12px;height:5.5px;background:#1c1c1c;"></div>
<div class="a" style="left:167.6px;top:519.8px;width:40px;height:5.8px;background:#4b4b4b;"></div>
<svg style="left:167px;top:520px" width="41" height="6" viewBox="167 520 41 6"><path d="M170 525.4C178 525.2 184 520.4 194 520.4C201 520.4 205 522.4 207.4 524V525.4Z" fill="#262626"/><rect x="180.6" y="520" width="1.5" height="5.5" fill="#a4a4a4"/></svg>
<div class="a" style="left:209.6px;top:520px;width:7.6px;height:5.6px;background:#585858;"></div>
<div class="a" style="left:219.8px;top:520px;width:7.6px;height:5.6px;background:#585858;"></div>
<div class="a" style="left:231px;top:520px;width:7.6px;height:5.6px;background:#585858;"></div>
<div class="a" style="left:241.2px;top:520px;width:5.4px;height:5.6px;background:#585858;"></div>
<svg style="left:209px;top:518.2px" width="40" height="7" viewBox="209 519.6 40 7" fill="none" stroke="#d0d0d0" stroke-width="0.8"><path d="M211.4 524.8A2.2 2.2 0 0 1 215.6 524.8M210.6 523.6L211.4 525L212.6 524.2"/><path d="M221.4 524.8A2.2 2.2 0 0 1 225.6 524.8M226.4 523.6L225.6 525L224.4 524.2"/><circle cx="234.8" cy="522.9" r="1.9"/><path d="M234.8 521.8V523H235.8" stroke-width="0.6"/><path d="M244.8 521.6L243 522.9L244.8 524.2Z" fill="#d0d0d0" stroke-width="0.4"/></svg>
<div class="a" style="left:247px;top:519.6px;width:552px;height:6px;background:#484848;"></div>
<div class="a" style="left:388px;top:519.9px;width:301.3px;height:5.1px;background:#606060;border-radius:1px"></div>
<div class="a" style="left:82.3px;top:528.2px;width:20px;height:17px;background:#4a4a4a;"></div>
<div class="a" style="left:106px;top:528.2px;width:19.7px;height:17px;background:#4a4a4a;"></div>
<svg style="left:70px;top:526px" width="60" height="21" viewBox="70 526 60 21" fill="none" stroke="#c8c8c8" stroke-width="0.8" stroke-linecap="round" stroke-linejoin="round"><path d="M73.4 531.4L75.6 529.4L77.8 531.4" stroke="#8a8a8a"/><path d="M73.4 540.8L75.6 542.8L77.8 540.8M73.4 543.4L75.6 545.4L77.8 543.4" stroke="#8a8a8a"/><rect x="88.4" y="532.6" width="8" height="8.2" rx="1"/><circle cx="92.4" cy="535.2" r="0.7" fill="#c8c8c8"/><circle cx="92.4" cy="538.2" r="0.7" fill="#c8c8c8"/><rect x="111.4" y="532.6" width="9.4" height="8.2" rx="1"/><circle cx="116.1" cy="536.7" r="1.9"/><path d="M112.4 536.7H114.2M118 536.7H119.8"/></svg>
<svg style="left:270px;top:548px" width="370" height="26" viewBox="270 548 370 26"><defs><linearGradient id="wl" x1="0" y1="0" x2="1" y2="1"><stop offset="0" stop-color="#6fdcff"/><stop offset="1" stop-color="#1490df"/></linearGradient><linearGradient id="cp" x1="0" y1="0" x2="1" y2="1"><stop offset="0" stop-color="#2a7cf0"/><stop offset="0.5" stop-color="#c060d8"/><stop offset="1" stop-color="#f8a030"/></linearGradient><linearGradient id="cpl" x1="0" y1="0" x2="0" y2="1"><stop offset="0" stop-color="#2a86f0"/><stop offset="0.45" stop-color="#2cc0b0"/><stop offset="0.75" stop-color="#f0c030"/><stop offset="1" stop-color="#f06a30"/></linearGradient><linearGradient id="cpr" x1="0" y1="0" x2="0" y2="1"><stop offset="0" stop-color="#6a60f0"/><stop offset="0.5" stop-color="#c050e0"/><stop offset="1" stop-color="#f05a70"/></linearGradient><linearGradient id="ed" x1="0" y1="0.3" x2="1" y2="0.5"><stop offset="0" stop-color="#2a9ee4"/><stop offset="0.55" stop-color="#3cc0b0"/><stop offset="1" stop-color="#62d47c"/></linearGradient><linearGradient id="pic" x1="0" y1="0" x2="1" y2="0"><stop offset="0" stop-color="#22389a"/><stop offset="0.5" stop-color="#5a48b4"/><stop offset="1" stop-color="#1e3a98"/></linearGradient></defs><rect x="277.9" y="555.1" width="6" height="6" rx="0.4" fill="url(#wl)"/><rect x="284.3" y="555.1" width="6" height="6" rx="0.4" fill="url(#wl)"/><rect x="277.9" y="561.5" width="6" height="6" rx="0.4" fill="url(#wl)"/><rect x="284.3" y="561.5" width="6" height="6" rx="0.4" fill="url(#wl)"/><rect x="297.3" y="552.8" width="115.8" height="16.5" rx="8.25" fill="#f1efee"/><circle cx="306.5" cy="560.7" r="2.8" fill="none" stroke="#2a2a2a" stroke-width="1"/><path d="M308.6 563L310.8 565.4" stroke="#2a2a2a" stroke-width="1.1" stroke-linecap="round"/><path d="M386 561C386 556 391 554.4 394.6 555.4C397 553.2 402 553.2 404 555.2C408 554.4 411 557.4 410.8 561C411 565 407 567.6 398 567.6C389 567.6 386 565 386 561Z" fill="url(#pic)"/><circle cx="398" cy="558" r="1.6" fill="#f0c840"/><circle cx="393" cy="560.4" r="1.2" fill="#e890c0"/><circle cx="403.4" cy="560" r="1.3" fill="#e8d070"/><path d="M389 564.4C394 562.6 402 562.6 408 564.4" stroke="#e0c060" stroke-width="1" fill="none"/><path d="M394 566C397 565 400 565 403 566" stroke="#8ad0f0" stroke-width="0.8" fill="none"/><rect x="420.2" y="558.6" width="9.4" height="8" rx="1" fill="#7a7a7a"/><rect x="423.4" y="555" width="9.8" height="8.6" rx="1" fill="#e0e0e0"/><path d="M450.4 557C446.6 556.6 445.4 559.6 445.5 561.6C445.6 564.6 447.6 565.6 449.8 565.4" stroke="url(#cpl)" stroke-width="2.7" fill="none" stroke-linecap="round"/><path d="M450 557C453.6 556.8 455 559 454.7 561.2C454.3 564 452.4 565.6 450 565.4" stroke="url(#cpr)" stroke-width="2.7" fill="none" stroke-linecap="round"/><path d="M466.8 556A1 1 0 0 1 467.8 555H471.4L472.8 556.4H479A1 1 0 0 1 480 557.4V560H466.8Z" fill="#e8a820"/><rect x="466.8" y="557.4" width="13.2" height="9.6" rx="1" fill="#f8cc48"/><rect x="469.4" y="562.8" width="7.4" height="4.2" rx="0.6" fill="#2a84dc"/><path d="M493.9 557.8V557A2.6 2.6 0 0 1 499.1 557V557.8" stroke="#3aa4ee" stroke-width="1" fill="none"/><rect x="490" y="557.5" width="13" height="10" rx="1.4" fill="#f2f2f2"/><rect x="493.8" y="560" width="2.5" height="2.5" fill="#f25022"/><rect x="496.8" y="560" width="2.5" height="2.5" fill="#7fba00"/><rect x="493.8" y="563" width="2.5" height="2.5" fill="#00a4ef"/><rect x="496.8" y="563" width="2.5" height="2.5" fill="#ffb900"/><circle cx="520" cy="561" r="6.8" fill="#1b84dc"/><path d="M520 554.2A6.8 6.8 0 0 1 526.8 561C526.8 562.8 525.6 563.8 524.2 563.8C522.8 563.8 522.4 562.8 522.8 561.8C523.4 560.2 522.4 558.2 520 558C517.4 557.8 515 559 513.6 561.6C513 557.4 516.4 554.2 520 554.2Z" fill="url(#ed)"/><path d="M515.8 560.4C515 563.8 517.2 567 521.2 567.6C523.8 567.9 525.8 566.8 526.6 565C524.6 566.2 521.6 565.8 520.4 563.8C519.6 562.4 520 561 521 560.2C519 559.2 516.4 559.4 515.8 560.4Z" fill="#0c55a6"/><path d="M522.9 562C523.2 563.6 524.8 564 526.3 563.5C526.7 562.6 526.8 561.8 526.8 561.2L523 561.2Z" fill="#2a1d15"/><rect x="533" y="550.8" width="21" height="20.6" rx="2" fill="#7a4451"/><circle cx="543.5" cy="560.6" r="6.5" fill="#fbfbfb"/><path d="M540.5 558.4V561.2A1.5 1.5 0 0 0 543.5 561.2V559.4M543.5 561.2A1.5 1.5 0 0 0 546.5 561.2V558.4" stroke="#2e9be2" stroke-width="1.25" fill="none" stroke-linecap="round"/><circle cx="567.2" cy="561" r="6.6" fill="#e8453c"/><path d="M567.2 561L561.5 557.7A6.6 6.6 0 0 0 563.9 566.7L567.2 561Z" fill="#2ea352"/><path d="M567.2 561L563.9 566.7A6.6 6.6 0 0 0 572.9 557.7H567.2Z" fill="#f7c52c"/><path d="M561.5 557.7A6.6 6.6 0 0 1 572.9 557.7H567.2Z" fill="#e8453c"/><circle cx="567.2" cy="561" r="3" fill="#f4f4f4"/><circle cx="567.2" cy="561" r="2.3" fill="#3f82ee"/><circle cx="571.8" cy="555.8" r="3.5" fill="#c89434"/><circle cx="571.8" cy="555" r="1.2" fill="#5a3c10"/><path d="M569.6 558C570.2 556.6 573.4 556.6 574 558" fill="#5a3c10"/><rect x="583.8" y="554.4" width="13.4" height="13.2" rx="3" fill="#ececec"/><path d="M592.6 561.4C592.4 560.2 590.6 559.8 589.4 560.4C588 561.2 588.4 563 590.4 563.2C593.4 563.6 595.8 562.2 595.6 560.2C595.4 558 592.4 557 589.6 557.6C586.6 558.2 585 560 585.6 562.2C586.2 564.4 589 565.2 591.6 565" fill="none" stroke="#808080" stroke-width="1.2" stroke-linecap="round"/><rect x="603" y="550.4" width="20.2" height="20.6" rx="2" fill="#3c302a"/><rect x="606.8" y="554.2" width="13.2" height="13.2" rx="3" fill="#f3f3f3"/><path d="M613.6 560.2C612.4 560.6 611 560.2 610.6 559C610.2 557.4 612 556.4 614 556.5C616.6 556.6 618 558 617.4 559.8C616.8 561.6 614 562 613.2 563.6" stroke="#151515" stroke-width="1.5" fill="none" stroke-linecap="round"/><circle cx="613" cy="565.6" r="0.95" fill="#151515"/><rect x="609.2" y="569.5" width="8.6" height="1.6" rx="0.8" fill="#58c0f0"/><rect x="518.6" y="570" width="2.8" height="1.3" rx="0.65" fill="#9a9a9a"/><rect x="541.9" y="570.1" width="3.2" height="1.3" rx="0.65" fill="#e8a8b8"/><rect x="566" y="570" width="2.8" height="1.3" rx="0.65" fill="#9a9a9a"/><rect x="589" y="570" width="2.8" height="1.3" rx="0.65" fill="#9a9a9a"/></svg>
<span class="t" id="t0" style="left:356.6px;top:3.40px;font-size:6.6px;color:#989898;transform:scaleX(0.7080);">イラスト*</span>
<span class="t" id="t1" style="left:379.4px;top:3.40px;font-size:6.6px;color:#989898;transform:scaleX(0.8985);">(B5 2508 x 3541px 350dpi 20.2%)</span>
<span class="t" id="t2" style="left:472.8px;top:3.40px;font-size:6.6px;color:#989898;transform:scaleX(0.8645);">- CLIP STUDIO PAINT EX</span>
<span class="t" id="t3" style="left:-3px;top:15.35px;font-size:7.1px;color:#d6d6d6;transform:scaleX(0.7393);">(E)</span>
<span class="t" id="t4" style="left:14px;top:15.35px;font-size:7.1px;color:#d6d6d6;transform:scaleX(0.8036);">ページ管理(P)</span>
<span class="t" id="t5" style="left:61px;top:15.35px;font-size:7.1px;color:#d6d6d6;transform:scaleX(0.7054);">アニメーション(A)</span>
<span class="t" id="t6" style="left:112px;top:15.35px;font-size:7.1px;color:#d6d6d6;transform:scaleX(0.7193);">レイヤー(L)</span>
<span class="t" id="t7" style="left:150px;top:15.35px;font-size:7.1px;color:#d6d6d6;transform:scaleX(0.8720);">選択範囲(S)</span>
<span class="t" id="t8" style="left:194px;top:15.35px;font-size:7.1px;color:#d6d6d6;transform:scaleX(0.9300);">表示(V)</span>
<span class="t" id="t9" style="left:226px;top:15.35px;font-size:7.1px;color:#d6d6d6;transform:scaleX(0.6900);">フィルター(I)</span>
<span class="t" id="t10" style="left:265px;top:15.35px;font-size:7.1px;color:#d6d6d6;transform:scaleX(0.7251);">ウィンドウ(W)</span>
<span class="t" id="t11" style="left:309px;top:15.35px;font-size:7.1px;color:#d6d6d6;transform:scaleX(0.7868);">ヘルプ(H)</span>
<span class="t" id="t12" style="left:72px;top:42.10px;font-size:5.8px;color:#e4e6ee;transform:scaleX(0.6514);">イラスト*</span>
<span class="t" id="t13" style="left:-4px;top:40.70px;font-size:5.6px;color:#c8c8c8;transform:scaleX(0.8439);">ル[塗りつぶし]</span>
<span class="t" id="t14" style="left:28.6px;top:52.10px;font-size:6.6px;color:#e2e2e2;transform:scaleX(0.7462);">濃くなる秒</span>
<span class="t" id="t15" style="left:3.5px;top:74.70px;font-size:6.6px;color:#dcdcdc;transform:scaleX(0.8608);">編集レイヤーのみ参照</span>
<span class="t" id="t16" style="left:16.5px;top:93.40px;font-size:6.6px;color:#eef0f6;transform:scaleX(0.8295);text-shadow:0 0 1px #222,0 0 1px #222;">他レイヤーを参照</span>
<span class="t" id="t17" style="left:33.5px;top:112.70px;font-size:6.6px;color:#dcdcdc;transform:scaleX(0.8211);">囲って塗る</span>
<span class="t" id="t18" style="left:10px;top:132.30px;font-size:6.6px;color:#dcdcdc;transform:scaleX(0.8493);">塗り残し部分に塗る</span>
<span class="t" id="t19" style="left:0.6px;top:151.70px;font-size:6.6px;color:#cfcfcf;transform:scaleX(0.8076);">ツールを追加する</span>
<span class="t" id="t20" style="left:-3px;top:279.20px;font-size:5.8px;color:#c8c8c8;transform:scaleX(0.6905);">プロパティ[他レイヤーを参照]</span>
<span class="t" id="t21" style="left:-2.6px;top:287.50px;font-size:6.6px;color:#dcdcdc;transform:scaleX(1.0009);">照</span>
<span class="t" id="t22" style="left:-0.4px;top:311.70px;font-size:7.4px;color:#e0e0e0;transform:scaleX(0.6492);">セルをたどる</span>
<span class="t" id="t23" style="left:-2.6px;top:323.40px;font-size:5.6px;color:#c4c4c4;transform:scaleX(0.8201);">ら</span>
<span class="t" id="t24" style="left:-2.4px;top:344.40px;font-size:5.8px;color:#c8c8c8;transform:scaleX(0.6156);">サイズ</span>
<span class="t" id="t25" style="left:-0.7999999999999998px;top:367.20px;font-size:6px;color:#989898;transform:scaleX(0.8150);">1.5</span>
<span class="t" id="t26" style="left:18.1px;top:367.20px;font-size:6px;color:#989898;transform:scaleX(0.8972);">2</span>
<span class="t" id="t27" style="left:32.800000000000004px;top:367.20px;font-size:6px;color:#989898;transform:scaleX(0.8150);">2.5</span>
<span class="t" id="t28" style="left:51.3px;top:367.20px;font-size:6px;color:#989898;transform:scaleX(0.8972);">3</span>
<span class="t" id="t29" style="left:1.1px;top:388.20px;font-size:6px;color:#7c7c7c;transform:scaleX(0.8972);">6</span>
<span class="t" id="t30" style="left:18.1px;top:388.20px;font-size:6px;color:#7c7c7c;transform:scaleX(0.8972);">7</span>
<span class="t" id="t31" style="left:34.7px;top:388.20px;font-size:6px;color:#7c7c7c;transform:scaleX(0.8972);">8</span>
<span class="t" id="t32" style="left:49.8px;top:388.20px;font-size:6px;color:#7c7c7c;transform:scaleX(0.8972);">10</span>
<span class="t" id="t33" style="left:-0.3999999999999999px;top:409.20px;font-size:6px;color:#6d6d6d;transform:scaleX(0.8972);">17</span>
<span class="t" id="t34" style="left:16.6px;top:409.20px;font-size:6px;color:#6d6d6d;transform:scaleX(0.8972);">20</span>
<span class="t" id="t35" style="left:33.2px;top:409.20px;font-size:6px;color:#6d6d6d;transform:scaleX(0.8972);">25</span>
<span class="t" id="t36" style="left:49.8px;top:409.20px;font-size:6px;color:#6d6d6d;transform:scaleX(0.8972);">30</span>
<span class="t" id="t37" style="left:-4.4px;top:442.50px;font-size:6.8px;color:#d8d8d8;transform:scaleX(0.6400);">のことね</span>
<span class="t" id="t38" style="left:329.2px;top:29.50px;font-size:6.4px;color:#c6c6c6;transform:scaleX(0.8421);">?</span>
<span class="t" id="t39" style="left:111.2px;top:519.50px;font-size:6.6px;color:#f4f4f4;transform:scaleX(0.7786);">20.2</span>
<span class="t" id="t40" style="left:126.6px;top:519.20px;font-size:7px;color:#9a9a9a;transform:scaleX(1.1237);">−</span>
<span class="t" id="t41" style="left:137.4px;top:519.20px;font-size:7px;color:#9a9a9a;transform:scaleX(1.1237);">+</span>
<span class="t" id="t42" style="left:158.8px;top:519.50px;font-size:6.6px;color:#f4f4f4;transform:scaleX(0.8286);">0.0</span>
<span class="t" id="t43" style="left:736.6px;top:499.60px;font-size:10.8px;color:#828282;transform:scaleX(0.9586);">Windows</span>
<span class="t" id="t44" style="left:781.6px;top:499.80px;font-size:10.4px;color:#828282;transform:scaleX(0.7959);">のライセンス認証</span>
<span class="t" id="t45" style="left:736.6px;top:513.60px;font-size:7.4px;color:#808080;transform:scaleX(0.8579);">設定を開き、</span>
<span class="t" id="t46" style="left:777.3px;top:513.50px;font-size:7.6px;color:#808080;transform:scaleX(1.0000);">Windows のライセンス認証を行ってください。</span>
<span class="t" id="t47" style="left:316.4px;top:557.60px;font-size:7.2px;color:#6a6a6a;transform:scaleX(1.0145);">検索</span>
</body>
</html>
